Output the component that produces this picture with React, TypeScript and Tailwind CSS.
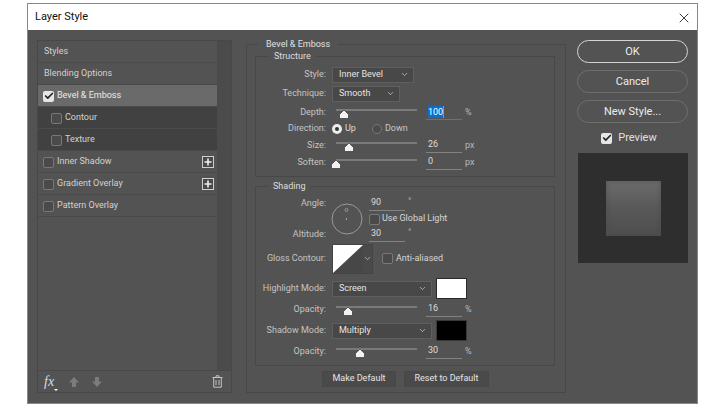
import { Check, ChevronDown, X } from "lucide-react";

const effects = [
  { label: "Styles" },
  { label: "Blending Options" },
  { label: "Bevel & Emboss", box: true, on: true, active: true },
  { label: "Contour", box: true, sub: true },
  { label: "Texture", box: true, sub: true },
  { label: "Inner Shadow", box: true, plus: true },
  { label: "Gradient Overlay", box: true, plus: true },
  { label: "Pattern Overlay", box: true },
];

const Box = ({ on = false }: { on?: boolean }) =>
  on ? (
    <span className="flex h-[11px] w-[11px] shrink-0 items-center justify-center rounded-[2px] bg-[#e6e6e6]">
      <Check size={10} strokeWidth={4} className="text-[#222]" />
    </span>
  ) : (
    <span className="h-[11px] w-[11px] shrink-0 rounded-[2px] border border-[#787878] bg-[#4a4a4a]" />
  );

const Label = ({ children }: { children: string }) => (
  <span className="w-[70px] shrink-0 whitespace-nowrap text-right text-[#c4c4c4]">{children}</span>
);

const Select = ({ value, width }: { value: string; width: string }) => (
  <div className={`flex h-[16px] items-center justify-between border border-[#5f5f5f] bg-[#484848] pl-[6px] pr-[4px] text-[#e4e4e4] ${width}`}>
    <span>{value}</span>
    <ChevronDown size={9} className="text-[#c8c8c8]" />
  </div>
);

const Slider = ({ pos }: { pos: number }) => (
  <div className="relative ml-[4px] h-[2px] w-[81px] -translate-y-[3px] bg-[#7a7a7a]">
    <svg width="10" height="9" viewBox="0 0 10 9" className="absolute top-[1px]" style={{ left: pos - 5 }}>
      <path d="M5 0 L9.5 4.5 V8.5 H0.5 V4.5 Z" fill="#f2f2f2" stroke="#222" strokeWidth="0.6" />
    </svg>
  </div>
);

const Num = ({ value, unit, selected = false, sup = false }: { value: string; unit: string; selected?: boolean; sup?: boolean }) => (
  <div className="ml-[3px] flex items-center">
    <div className={`flex h-[14px] w-[36px] items-center border-b pl-[2px] ${selected ? "border-[#2f7fd0]" : "border-[#828282]"}`}>
      {selected ? (
        <span className="border-r border-[#e08030] bg-[#0a6fd0] leading-[12px] text-white">{value}</span>
      ) : (
        <span className="text-[#dcdcdc]">{value}</span>
      )}
    </div>
    <span className={`ml-[3px] text-[#b8b8b8] ${sup ? "-translate-y-[2px]" : ""}`}>{unit}</span>
  </div>
);

const Row = ({ h, children }: { h: string; children: React.ReactNode }) => (
  <div className={`flex items-center gap-[6px] ${h}`}>{children}</div>
);

const SliderRow = ({ label, pos, value, unit, h, selected }: { label: string; pos: number; value: string; unit: string; h: string; selected?: boolean }) => (
  <Row h={h}>
    <Label>{label}</Label>
    <Slider pos={pos} />
    <Num value={value} unit={unit} selected={selected} />
  </Row>
);

const Radio = ({ on = false }: { on?: boolean }) =>
  on ? (
    <span className="flex h-[10px] w-[10px] items-center justify-center rounded-full bg-[#ececec]">
      <span className="h-[4px] w-[4px] rounded-full bg-[#333]" />
    </span>
  ) : (
    <span className="h-[10px] w-[10px] rounded-full border border-[#777] bg-[#4c4c4c]" />
  );

const Pill = ({ text, primary = false }: { text: string; primary?: boolean }) => (
  <div className={`flex h-[23px] items-center justify-center rounded-full border pt-[2px] text-[11px] text-[#ececec] ${primary ? "border-[#d4d4d4]" : "border-[#6f6f6f]"}`}>
    {text}
  </div>
);

const SmallButton = ({ text, width }: { text: string; width: string }) => (
  <div className={`flex h-[16px] items-center justify-center border border-[#484848] bg-[#4a4a4a] text-[#e4e4e4] ${width}`}>{text}</div>
);

export default function App() {
  return (
    <div className="h-[408px] w-[725px] overflow-hidden bg-white pl-[27px] pt-[3px] text-[9px] font-['Roboto',sans-serif]">
      <div className="flex h-[401px] w-[671px] flex-col border border-[#7f8b8f] bg-[#535353]">
        <div className="flex h-[26px] shrink-0 items-center justify-between bg-white pl-[7px] pr-[5px] pt-[1px] text-[11px] text-[#111]">
          <span>Layer Style</span>
          <X size={16} strokeWidth={1.3} className="text-[#222]" />
        </div>

        <div className="flex min-h-0 flex-1 pl-[9px] pt-[10px]">
          {/* effects list */}
          <div className="flex h-[353px] w-[195px] shrink-0 flex-col border border-[#484848]">
            <div className="flex min-h-0 flex-1">
              <div className="flex flex-1 flex-col">
                {effects.map((e) => (
                  <div
                    key={e.label}
                    className={`flex h-[22px] shrink-0 items-center gap-[3px] border-b border-[#4a4a4a] pr-[3px] pt-[1px] ${e.sub ? "bg-[#414141] pl-[13px] text-[#c8c8c8]" : e.box ? "pl-[5px]" : "pl-[6px]"} ${e.active ? "bg-[#6a6a6a] text-[#ececec]" : "text-[#d2d2d2]"}`}
                  >
                    {e.box && <Box on={e.on} />}
                    <span className="flex-1">{e.label}</span>
                    {e.plus && (
                      <span className="flex h-[12px] w-[12px] items-center justify-center border border-[#cfcfcf] bg-[#4a4a4a]">
                        <svg width="8" height="8" viewBox="0 0 8 8"><path d="M4 0.5V7.5M0.5 4H7.5" stroke="#f0f0f0" strokeWidth="1.6" /></svg>
                      </span>
                    )}
                  </div>
                ))}
              </div>
              <div className="w-[14px] shrink-0 bg-[#4b4b4b]" />
            </div>
            <div className="flex h-[22px] shrink-0 items-center border-t border-[#484848] pl-[6px] pr-[8px]">
              <span className="relative font-['Liberation_Serif',serif] text-[14px] italic text-[#dcdcdc]">
                fx
                <span className="absolute -right-[4px] bottom-[1px] h-0 w-0 border-x-[2px] border-t-[2px] border-x-transparent border-t-white" />
              </span>
              <svg width="12" height="12" viewBox="0 0 12 12" className="ml-[14px]"><path d="M6 1 L11 6.5 H8 V11 H4 V6.5 H1 Z" fill="#7c7c7c" /></svg>
              <svg width="12" height="12" viewBox="0 0 12 12" className="ml-[11px]"><path d="M6 11 L11 5.5 H8 V1 H4 V5.5 H1 Z" fill="#7c7c7c" /></svg>
              <svg width="11" height="13" viewBox="0 0 11 13" className="ml-auto"><path d="M0.5 2.5H10.5M4 2.5V0.8H7V2.5M1.7 2.5V12.2H9.3V2.5M4 5V10M7 5V10" fill="none" stroke="#c4c4c4" strokeWidth="1" /></svg>
            </div>
          </div>

          {/* settings */}
          <div className="ml-[14px] flex h-[353px] w-[320px] shrink-0 flex-col">
            <fieldset className="flex h-[353px] flex-col border border-[#484848] pl-[8px] pr-[10px]">
              <legend className="ml-[3px] px-[8px] leading-[9px] text-[#e0e0e0]">Bevel &amp; Emboss</legend>
              <fieldset className="mt-[2px] h-[126px] border border-[#484848] pt-[4px]">
                <legend className="ml-[13px] px-[5px] leading-[10px] text-[#dedede]">Structure</legend>
                <Row h="h-[19px]"><Label>Style:</Label><Select value="Inner Bevel" width="w-[82px]" /></Row>
                <Row h="h-[19px]"><Label>Technique:</Label><Select value="Smooth" width="w-[68px]" /></Row>
                <SliderRow label="Depth:" pos={8} value="100" unit="%" h="h-[19px]" selected />
                <Row h="h-[13px]">
                  <Label>Direction:</Label>
                  <span className="flex items-center gap-[3px] text-[#dcdcdc]"><Radio on />Up</span>
                  <span className="ml-[10px] flex items-center gap-[3px] text-[#c8c8c8]"><Radio />Down</span>
                </Row>
                <SliderRow label="Size:" pos={13} value="26" unit="px" h="h-[21px]" />
                <SliderRow label="Soften:" pos={0} value="0" unit="px" h="h-[13px]" />
              </fieldset>

              <fieldset className="mt-[4px] h-[185px] border border-[#484848] pt-[5px]">
                <legend className="ml-[12px] px-[5px] leading-[10px] text-[#dedede]">Shading</legend>
                <div className="flex h-[46px] gap-[6px]">
                  <div className="flex flex-col justify-between py-[1px]">
                    <Label>Angle:</Label>
                    <Label>Altitude:</Label>
                  </div>
                  <svg width="32" height="32" viewBox="0 0 32 32" className="-ml-[1px] mt-[7px] shrink-0">
                    <circle cx="16" cy="16" r="15" fill="none" stroke="#999" />
                    <circle cx="15.5" cy="7" r="1.5" fill="none" stroke="#aaa" strokeWidth="0.7" />
                    <circle cx="15.5" cy="16" r="0.7" fill="#ccc" />
                  </svg>
                  <div className="-ml-[3px] flex flex-col">
                    <div className="flex h-[15px] items-center">
                      <Num value="90" unit="°" sup />
                    </div>
                    <div className="ml-[3px] flex h-[16px] items-center gap-[2px] text-[#d6d6d6]"><Box />Use Global Light</div>
                    <div className="flex h-[15px] items-center">
                      <Num value="30" unit="°" sup />
                    </div>
                  </div>
                </div>
                <Row h="h-[33px]">
                  <Label>Gloss Contour:</Label>
                  <div className="flex h-[30px] w-[41px] border border-[#444]">
                    <svg width="30" height="28" viewBox="0 0 30 28" className="shrink-0">
                      <rect width="30" height="28" fill="#474747" />
                      <path d="M0 0H30L0 28Z" fill="#fff" />
                    </svg>
                    <div className="flex flex-1 items-center justify-center bg-[#4a4a4a]"><ChevronDown size={9} className="text-[#c8c8c8]" /></div>
                  </div>
                  <span className="ml-[3px] flex items-center gap-[3px] text-[#d6d6d6]"><Box />Anti-aliased</span>
                </Row>
                <Row h="h-[27px]">
                  <Label>Highlight Mode:</Label>
                  <Select value="Screen" width="w-[100px]" />
                  <div className="-ml-[2px] h-[21px] w-[31px] border border-[#2a2a2a] bg-white" />
                </Row>
                <SliderRow label="Opacity:" pos={12} value="16" unit="%" h="h-[15px]" />
                <Row h="h-[27px]">
                  <Label>Shadow Mode:</Label>
                  <Select value="Multiply" width="w-[100px]" />
                  <div className="-ml-[2px] h-[21px] w-[31px] border border-[#3a3a3a] bg-black" />
                </Row>
                <SliderRow label="Opacity:" pos={24} value="30" unit="%" h="h-[15px]" />
              </fieldset>

              <div className="mt-[5px] flex gap-[8px] pl-[67px]">
                <SmallButton text="Make Default" width="w-[74px]" />
                <SmallButton text="Reset to Default" width="w-[85px]" />
              </div>
            </fieldset>
          </div>

          {/* buttons and preview */}
          <div className="ml-[11px] flex w-[111px] shrink-0 flex-col gap-[7px]">
            <Pill text="OK" primary />
            <Pill text="Cancel" />
            <Pill text="New Style..." />
            <div className="mt-[2px] flex h-[12px] items-center justify-center gap-[6px] pr-[7px] text-[11px] text-[#e0e0e0]"><Box on />Preview</div>
            <div className="ml-[1px] mt-[2px] flex h-[110px] w-[110px] items-center justify-center bg-[#2e2e2e]">
              <div className="h-[55px] w-[55px] bg-gradient-to-b from-[#6c6c6c] via-[#585858] to-[#4e4e4e] shadow-[inset_0_0_5px_rgba(70,70,70,0.6)]" />
            </div>
          </div>
        </div>
      </div>
    </div>
  );
}
